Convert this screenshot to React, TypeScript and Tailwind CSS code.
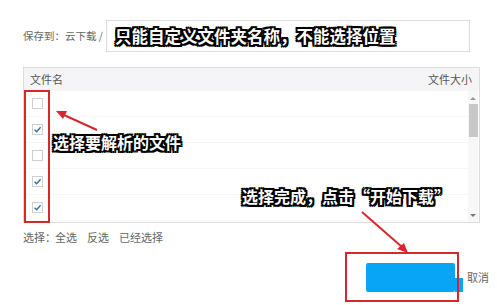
import React from "react";

const OUTLINE =
  "text-white font-bold [text-shadow:2px_0_0_#000,-2px_0_0_#000,0_2px_0_#000,0_-2px_0_#000,2px_2px_0_#000,-2px_-2px_0_#000,2px_-2px_0_#000,-2px_2px_0_#000,0_0_3px_#000]";

const ROWS = [false, true, false, true, true];

function Checkbox({ checked }: { checked: boolean }) {
  return (
    <div className="w-[11px] h-[11px] border border-[#cfcfcf] bg-white flex items-center justify-center">
      {checked && (
        <svg width="9" height="9" viewBox="0 0 9 9">
          <path d="M1.5 4.8 L3.6 6.8 L7.6 2.2" fill="none" stroke="#2f6fb0" strokeWidth="1.4" />
        </svg>
      )}
    </div>
  );
}

export default function App() {
  return (
    <div className="relative w-[497px] h-[305px] bg-white overflow-hidden font-['Noto_Sans_CJK_SC','Noto_Sans',sans-serif]">
      {/* 保存位置 */}
      <div className="pt-[20px] pl-[23px] flex items-center">
        <span className="text-[10.5px] text-[#666] leading-none w-[83px] whitespace-nowrap">保存到：云下载 /</span>
        <div className="w-[364px] h-[32px] border border-[#ddd] pl-[8px] flex items-center">
          <span className={`${OUTLINE} text-[16.5px] leading-none whitespace-nowrap`}>只能自定义文件夹名称，不能选择位置</span>
        </div>
      </div>

      {/* 文件列表 */}
      <div className="mt-[15px] ml-[23px] w-[457px] h-[156px] border border-[#dcdcdc] flex flex-col">
        <div className="h-[23px] bg-[#f5f5f7] flex items-center justify-between pl-[6px] pr-[7px] text-[11px] text-[#555]">
          <span>文件名</span>
          <span>文件大小</span>
        </div>
        <div className="flex flex-1">
          <div className="flex-1 flex flex-col">
            {ROWS.map((c, i) => (
              <div key={i} className="h-[26px] flex items-center pl-[8px] border-b border-[#f6f6f6]">
                <Checkbox checked={c} />
              </div>
            ))}
          </div>
          <div className="w-[10px] bg-[#f7f7f7] flex flex-col items-center mr-[1px]">
            <svg width="6" height="8" viewBox="0 0 6 8" className="mt-[4px]">
              <path d="M0 5 L3 2 L6 5 Z" fill="#999" />
            </svg>
            <div className="w-[9px] h-[33px] bg-[#c8c8c8] mt-[1px]" />
            <div className="flex-1" />
            <svg width="6" height="8" viewBox="0 0 6 8" className="mb-[3px]">
              <path d="M0 3 L3 6 L6 3 Z" fill="#777" />
            </svg>
          </div>
        </div>
      </div>

      {/* 选择 */}
      <div className="h-[28px] pl-[23px] flex items-center gap-[10px] text-[11px] text-[#666]">
        <span>
          选择：<span className="ml-[-1px]">全选</span>
        </span>
        <span>反选</span>
        <span>已经选择</span>
      </div>

      {/* 按钮 */}
      <div className="mt-[12px] pl-[366px] flex items-center">
        <div className="relative w-[89px] h-[29px] bg-[#08a5f6] rounded-[2px]">
          <div className="absolute right-[-8px] bottom-0 w-[8px] h-[14px] bg-[#08a5f6]" />
        </div>
        <span className="ml-[12px] text-[11px] text-[#666]">取消</span>
      </div>

      {/* 标注 */}
      <div className={`absolute left-[53px] top-[134px] text-[16px] leading-none whitespace-nowrap ${OUTLINE}`}>选择要解析的文件</div>
      <div className={`absolute left-[242px] top-[188px] text-[16px] leading-none whitespace-nowrap ${OUTLINE}`}>
        选择完成，点击“开始下载”
      </div>
      <svg className="absolute inset-0 pointer-events-none" width="497" height="305" viewBox="0 0 497 305">
        <rect x="25" y="91" width="24" height="131" fill="none" stroke="#d6262e" strokeWidth="2" />
        <rect x="346" y="253" width="112" height="48" fill="none" stroke="#d6262e" strokeWidth="2" />
        <line x1="97" y1="130" x2="64" y2="115" stroke="#d6262e" strokeWidth="2" />
        <path d="M56 111 L67 111 L63 119 Z" fill="#d6262e" />
        <line x1="362" y1="212" x2="402" y2="247" stroke="#d6262e" strokeWidth="2" />
        <path d="M408 253 L397 249 L404 243 Z" fill="#d6262e" />
      </svg>
    </div>
  );
}
